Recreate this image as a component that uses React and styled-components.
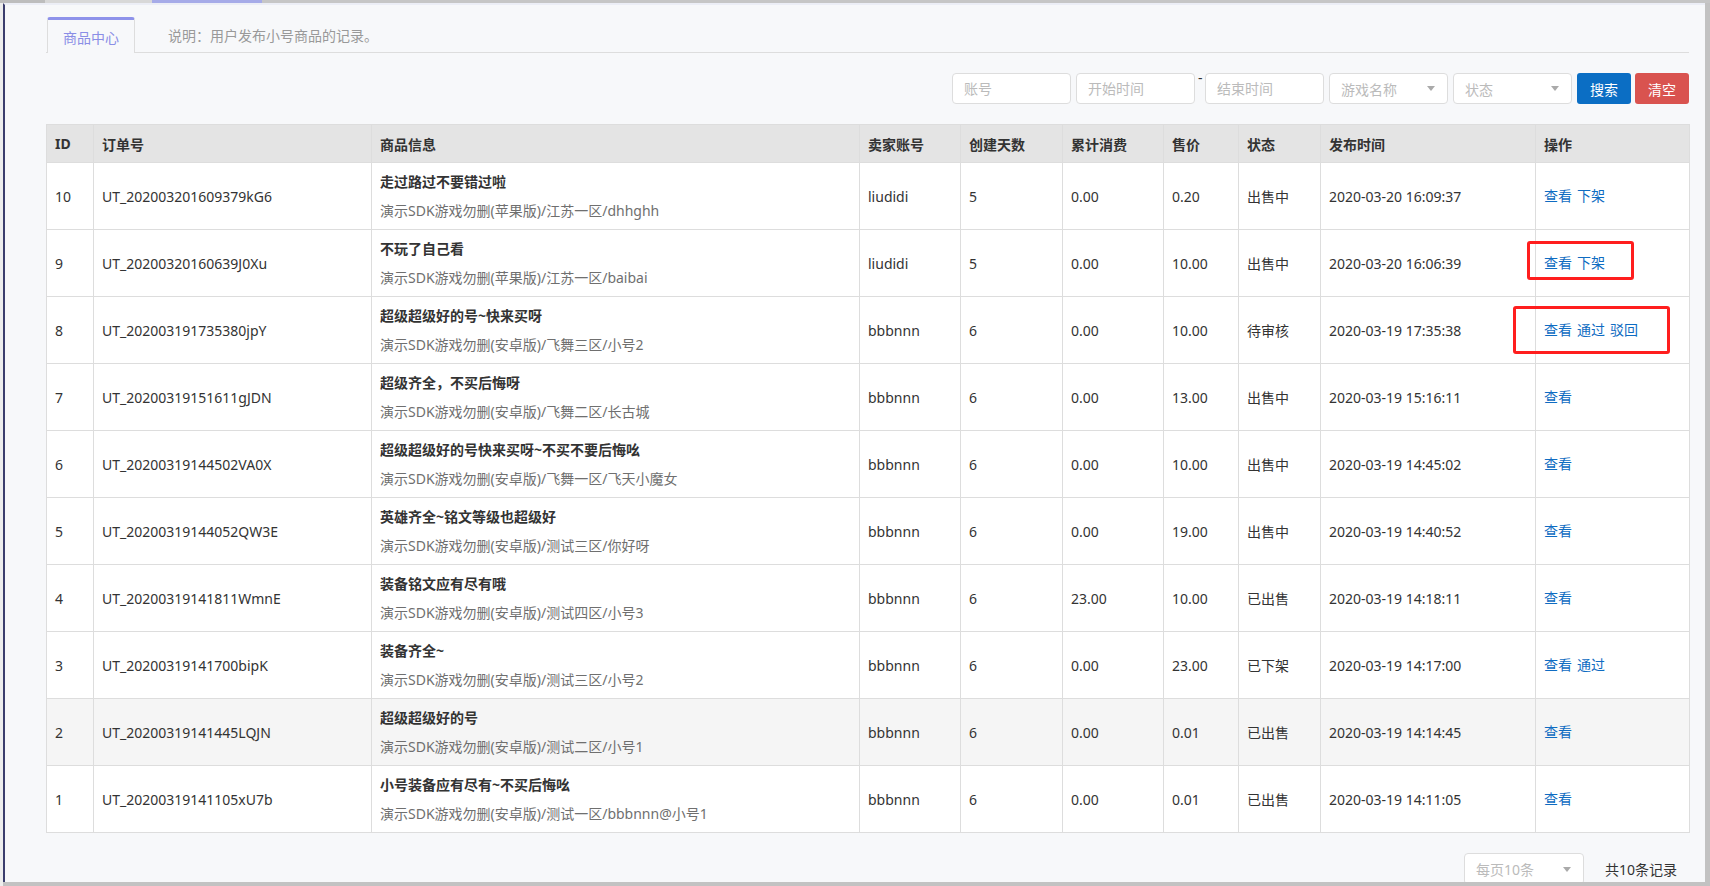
import React from "react";
import styled, { createGlobalStyle } from "styled-components";

const GlobalStyle = createGlobalStyle`
  html, body { margin: 0; padding: 0; }
  body {
    font-family: "Noto Sans", "Noto Sans CJK SC", sans-serif;
    font-size: 14px;
    color: #333;
    background: #f7f8fa;
  }
  * { box-sizing: border-box; }
`;

const Frame = styled.div`
  width: 1710px;
  height: 886px;
  display: flex;
  flex-direction: column;
  background: #c2c2c2;
  overflow: hidden;
`;

const TopStrip = styled.div`
  height: 3px;
  display: flex;
  flex-shrink: 0;
`;

const StripSeg = styled.div`
  width: ${(p) => (p.$w ? `${p.$w}px` : "auto")};
  flex: ${(p) => (p.$w ? "none" : "1")};
  background: ${(p) => p.$c};
`;

const Main = styled.div`
  flex: 1;
  display: flex;
  min-height: 0;
`;

const Gutter = styled.div`
  width: 3px;
  background: #ededed;
  flex-shrink: 0;
`;

const Page = styled.div`
  flex: 1;
  min-width: 0;
  background: #f7f8fa;
  border-left: 2px solid #3b3d6d;
  border-top: 2px solid #eceef6;
  margin-right: 5px;
  margin-bottom: 4px;
  padding: 12px 16px 0 41px;
  overflow: hidden;
  display: flex;
  flex-direction: column;
`;

const TabBar = styled.div`
  display: flex;
  height: 36px;
  border-bottom: 1px solid #ddd;
`;

const Tab = styled.div`
  height: 36px;
  margin-left: 1px;
  margin-bottom: -1px;
  padding: 0 15px;
  display: flex;
  align-items: center;
  background: #f7f8fa;
  border-top: 3px solid #8e92ea;
  border-left: 1px solid #ddd;
  border-right: 1px solid #ddd;
  border-radius: 3px 3px 0 0;
  color: #8a8ee6;
  font-size: 14px;
`;

const Desc = styled.div`
  display: flex;
  align-items: center;
  padding-left: 33px;
  color: #999;
  font-size: 14px;
`;

const FilterBar = styled.div`
  margin-top: 20px;
  display: flex;
  justify-content: flex-end;
  align-items: flex-start;
  gap: 5px;
  height: 31px;
`;

const TextInput = styled.input`
  width: 119px;
  height: 31px;
  border: 1px solid #ddd;
  border-radius: 4px;
  background: #fff;
  padding: 0 11px;
  font-family: inherit;
  font-size: 14px;
  color: #333;
  outline: none;
  &::placeholder { color: #bbb; }
`;

const Dash = styled.span`
  display: block;
  width: 4px;
  margin: 0 -2px;
  line-height: 10px;
  font-size: 14px;
  text-align: center;
  color: #333;
`;

const SelectBox = styled.div`
  width: ${(p) => p.$w || 119}px;
  height: ${(p) => p.$h || 31}px;
  border: 1px solid #ddd;
  border-radius: 4px;
  background: #fff;
  padding: 0 11px;
  display: flex;
  align-items: center;
  justify-content: space-between;
  color: #bbb;
  font-size: 14px;
  &::after {
    content: "";
    width: 0;
    height: 0;
    border-left: 4px solid transparent;
    border-right: 4px solid transparent;
    border-top: 5px solid #aaa;
    margin-right: 1px;
  }
`;

const Button = styled.button`
  width: 54px;
  height: 31px;
  border: none;
  border-radius: 3px;
  background: ${(p) => (p.$danger ? "#d9534f" : "#0b6ec4")};
  color: #fff;
  font-family: inherit;
  font-size: 14px;
  padding: 0;
  margin-left: ${(p) => (p.$danger ? "-1px" : "0")};
`;

const Table = styled.table`
  margin-top: 20px;
  width: 1643px;
  border-collapse: collapse;
  table-layout: fixed;
  background: #fff;
`;

const Th = styled.th`
  height: 38px;
  padding: 0 8px;
  text-align: left;
  font-weight: bold;
  font-size: 14px;
  color: #333;
  background: #e4e4e4;
  border: 1px solid #ddd;
`;

const Tr = styled.tr`
  background: ${(p) => (p.$hover ? "#f5f5f5" : "#fff")};
`;

const Td = styled.td`
  height: 67px;
  padding: 0 8px;
  border: 1px solid #ddd;
  vertical-align: middle;
  font-size: 14px;
  color: #333;
  white-space: nowrap;
`;

const Title = styled.div`
  font-weight: bold;
  line-height: 20px;
`;

const Sub = styled.div`
  margin-top: 9px;
  line-height: 20px;
  color: #6f6f6f;
`;

const Ops = styled.div`
  position: relative;
  display: flex;
  gap: 5px;
  line-height: 20px;
`;

const OpLink = styled.a`
  color: #0f6cc2;
  text-decoration: none;
  cursor: pointer;
`;

const Mark = styled.div`
  position: absolute;
  border: 3px solid #ff1e1e;
  border-radius: 3px;
  pointer-events: none;
`;

const Pager = styled.div`
  margin-top: 20px;
  display: flex;
  justify-content: flex-end;
  align-items: center;
  gap: 21px;
  padding-right: 12px;
`;

const Total = styled.span`
  font-size: 14px;
  color: #333;
`;

const cols = [47, 278, 488, 101, 102, 101, 75, 82, 215, 154];
const heads = ["ID", "订单号", "商品信息", "卖家账号", "创建天数", "累计消费", "售价", "状态", "发布时间", "操作"];

const rows = [
  { id: 10, no: "UT_202003201609379kG6", t: "走过路过不要错过啦", s: "演示SDK游戏勿删(苹果版)/江苏一区/dhhghh", u: "liudidi", d: 5, c: "0.00", p: "0.20", st: "出售中", tm: "2020-03-20 16:09:37", ops: ["查看", "下架"] },
  { id: 9, no: "UT_20200320160639J0Xu", t: "不玩了自己看", s: "演示SDK游戏勿删(苹果版)/江苏一区/baibai", u: "liudidi", d: 5, c: "0.00", p: "10.00", st: "出售中", tm: "2020-03-20 16:06:39", ops: ["查看", "下架"], mark: { left: -17, top: -12, width: 107, height: 39 } },
  { id: 8, no: "UT_202003191735380jpY", t: "超级超级好的号~快来买呀", s: "演示SDK游戏勿删(安卓版)/飞舞三区/小号2", u: "bbbnnn", d: 6, c: "0.00", p: "10.00", st: "待审核", tm: "2020-03-19 17:35:38", ops: ["查看", "通过", "驳回"], mark: { left: -31, top: -14, width: 157, height: 48 } },
  { id: 7, no: "UT_20200319151611gJDN", t: "超级齐全，不买后悔呀", s: "演示SDK游戏勿删(安卓版)/飞舞二区/长古城", u: "bbbnnn", d: 6, c: "0.00", p: "13.00", st: "出售中", tm: "2020-03-19 15:16:11", ops: ["查看"] },
  { id: 6, no: "UT_20200319144502VA0X", t: "超级超级好的号快来买呀~不买不要后悔吆", s: "演示SDK游戏勿删(安卓版)/飞舞一区/飞天小魔女", u: "bbbnnn", d: 6, c: "0.00", p: "10.00", st: "出售中", tm: "2020-03-19 14:45:02", ops: ["查看"] },
  { id: 5, no: "UT_20200319144052QW3E", t: "英雄齐全~铭文等级也超级好", s: "演示SDK游戏勿删(安卓版)/测试三区/你好呀", u: "bbbnnn", d: 6, c: "0.00", p: "19.00", st: "出售中", tm: "2020-03-19 14:40:52", ops: ["查看"] },
  { id: 4, no: "UT_20200319141811WmnE", t: "装备铭文应有尽有哦", s: "演示SDK游戏勿删(安卓版)/测试四区/小号3", u: "bbbnnn", d: 6, c: "23.00", p: "10.00", st: "已出售", tm: "2020-03-19 14:18:11", ops: ["查看"] },
  { id: 3, no: "UT_20200319141700bipK", t: "装备齐全~", s: "演示SDK游戏勿删(安卓版)/测试三区/小号2", u: "bbbnnn", d: 6, c: "0.00", p: "23.00", st: "已下架", tm: "2020-03-19 14:17:00", ops: ["查看", "通过"] },
  { id: 2, no: "UT_20200319141445LQJN", t: "超级超级好的号", s: "演示SDK游戏勿删(安卓版)/测试二区/小号1", u: "bbbnnn", d: 6, c: "0.00", p: "0.01", st: "已出售", tm: "2020-03-19 14:14:45", ops: ["查看"], hover: true },
  { id: 1, no: "UT_20200319141105xU7b", t: "小号装备应有尽有~不买后悔吆", s: "演示SDK游戏勿删(安卓版)/测试一区/bbbnnn@小号1", u: "bbbnnn", d: 6, c: "0.00", p: "0.01", st: "已出售", tm: "2020-03-19 14:11:05", ops: ["查看"] },
];

export default function App() {
  return (
    <>
      <GlobalStyle />
      <Frame>
        <TopStrip>
          <StripSeg $w={45} $c="#bdbdbd" />
          <StripSeg $w={107} $c="#d8d8d8" />
          <StripSeg $w={110} $c="#a6abe8" />
          <StripSeg $c="#c6c6c6" />
        </TopStrip>
        <Main>
          <Gutter />
          <Page>
            <TabBar>
              <Tab>商品中心</Tab>
              <Desc>说明：用户发布小号商品的记录。</Desc>
            </TabBar>
            <FilterBar>
              <TextInput placeholder="账号" />
              <TextInput placeholder="开始时间" />
              <Dash>-</Dash>
              <TextInput placeholder="结束时间" />
              <SelectBox>游戏名称</SelectBox>
              <SelectBox>状态</SelectBox>
              <Button>搜索</Button>
              <Button $danger>清空</Button>
            </FilterBar>
            <Table>
              <colgroup>
                {cols.map((w, i) => (
                  <col key={i} style={{ width: w }} />
                ))}
              </colgroup>
              <thead>
                <tr>
                  {heads.map((h) => (
                    <Th key={h}>{h}</Th>
                  ))}
                </tr>
              </thead>
              <tbody>
                {rows.map((r) => (
                  <Tr key={r.id} $hover={r.hover}>
                    <Td>{r.id}</Td>
                    <Td>{r.no}</Td>
                    <Td>
                      <Title>{r.t}</Title>
                      <Sub>{r.s}</Sub>
                    </Td>
                    <Td>{r.u}</Td>
                    <Td>{r.d}</Td>
                    <Td>{r.c}</Td>
                    <Td>{r.p}</Td>
                    <Td>{r.st}</Td>
                    <Td>{r.tm}</Td>
                    <Td>
                      <Ops>
                        {r.ops.map((o) => (
                          <OpLink key={o}>{o}</OpLink>
                        ))}
                        {r.mark && (
                          <Mark
                            style={{
                              left: r.mark.left,
                              top: r.mark.top,
                              width: r.mark.width,
                              height: r.mark.height,
                            }}
                          />
                        )}
                      </Ops>
                    </Td>
                  </Tr>
                ))}
              </tbody>
            </Table>
            <Pager>
              <SelectBox $w={120} $h={32}>每页10条</SelectBox>
              <Total>共10条记录</Total>
            </Pager>
          </Page>
        </Main>
      </Frame>
    </>
  );
}
